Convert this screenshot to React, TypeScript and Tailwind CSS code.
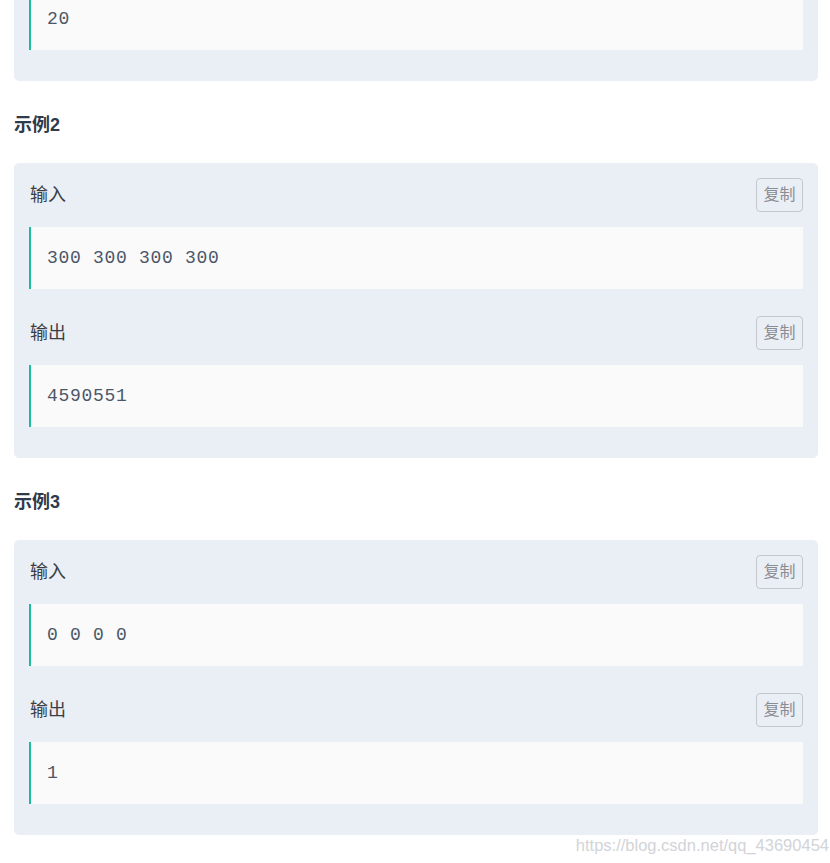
import React from "react";

const cjk = { fontFamily: '"Liberation Sans", "Noto Sans CJK SC", sans-serif' };
const mono = { fontFamily: '"Liberation Mono", "Courier New", monospace' };

function Code({ text }: { text: string }) {
  return (
    <div
      className="h-[62px] bg-[#fafafa] border-l-2 border-[#1abc9c] flex items-center pl-[16px] text-[18px] tracking-[0.7px] text-[#4b5768]"
      style={mono}
    >
      {text}
    </div>
  );
}

function Header({ label }: { label: string }) {
  return (
    <div className="h-[34px] flex items-center justify-between mb-[15px]">
      <span className="text-[18px] text-[#3a3f47] pl-[1px]" style={cjk}>
        {label}
      </span>
      <button
        className="w-[47px] h-[34px] border border-[#c4c7cc] rounded-[4px] text-[16px] text-[#8a8d92] flex items-center justify-center bg-transparent"
        style={cjk}
      >
        复制
      </button>
    </div>
  );
}

function Example({ title, input, output }: { title: string; input: string; output: string }) {
  return (
    <>
      <div className="h-[82px] flex items-center pt-[6px]">
        <span className="text-[18px] font-bold text-[#2f3a4a]" style={cjk}>
          {title}
        </span>
      </div>
      <div className="bg-[#eaeef5] rounded-[5px] px-[15px] pt-[15px] pb-[31px]">
        <Header label="输入" />
        <Code text={input} />
        <div className="h-[27px]" />
        <Header label="输出" />
        <Code text={output} />
      </div>
    </>
  );
}

export default function App() {
  return (
    <div className="relative w-[830px] h-[863px] overflow-hidden bg-white">
      <div className="pl-[14px] pr-[12px]">
        <div className="bg-[#eaeef5] rounded-b-[5px] px-[15px] pb-[31px] -mt-[12px]">
          <Code text="20" />
        </div>
        <Example title="示例2" input="300 300 300 300" output="4590551" />
        <Example title="示例3" input="0 0 0 0" output="1" />
      </div>
      <div
        className="absolute right-[1px] top-[835px] text-[16.5px] text-[#d2d4d8] leading-[20px]"
        style={{ fontFamily: '"Liberation Sans", Arial, sans-serif' }}
      >
        https://blog.csdn.net/qq_43690454
      </div>
    </div>
  );
}
